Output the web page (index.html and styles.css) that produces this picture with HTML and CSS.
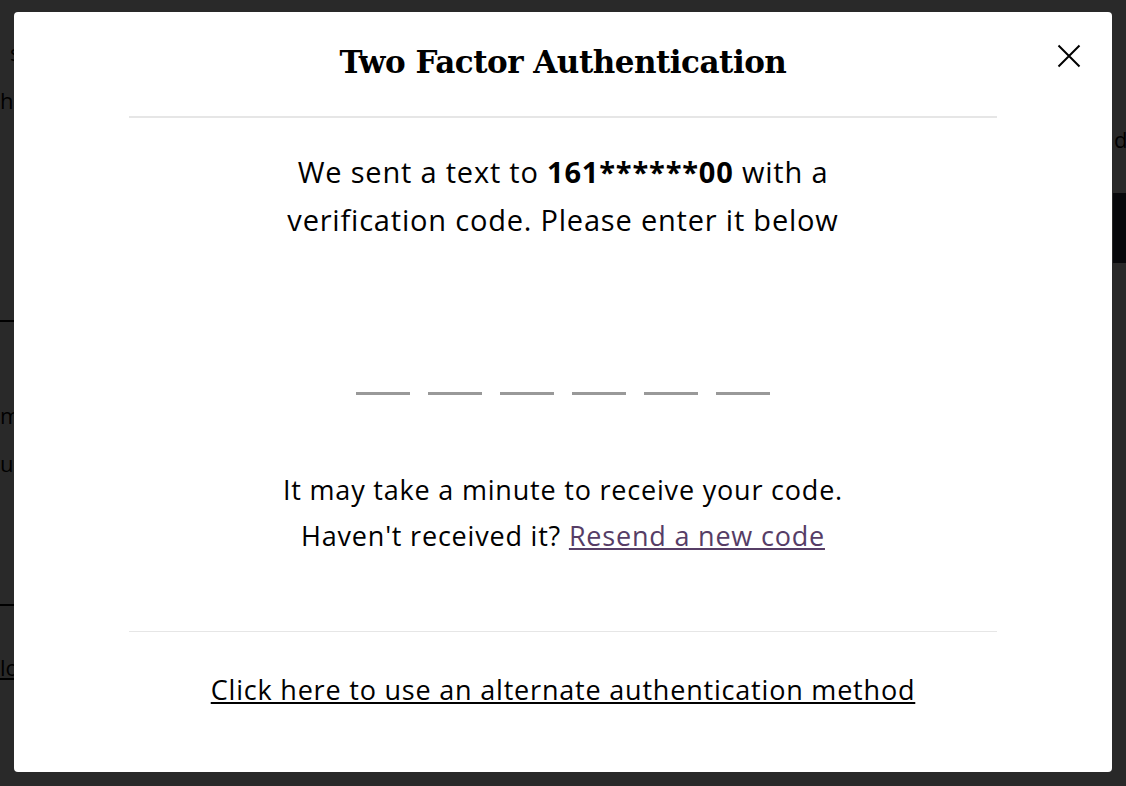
FILE: index.html
```html
<!DOCTYPE html>
<html lang="en">
<head>
    <meta charset="UTF-8">
    <meta name="viewport" content="width=device-width, initial-scale=1.0">
    <title>Two Factor Authentication</title>
    <link rel="stylesheet" href="styles.css">
</head>
<body>
    <!-- Account page sitting behind the dialog -->
    <div class="page">
        <div class="side">
            <p class="side-item side-top">statements</p>
            <p class="side-item">help centre</p>
            <hr class="side-rule">
            <p class="side-item">manage alerts</p>
            <p class="side-item">update details</p>
            <hr class="side-rule side-rule-low">
            <a class="side-link" href="#">log out</a>
        </div>
        <div class="main">
            <p class="main-note">d</p>
            <div class="main-bar"></div>
        </div>
    </div>

    <!-- Two factor dialog -->
    <div class="overlay">
        <div class="modal" role="dialog" aria-labelledby="tfaTitle">
            <button class="close" aria-label="Close">
                <svg width="24" height="24" viewBox="0 0 24 24">
                    <path d="M1.5 1.5 L22.5 22.5 M22.5 1.5 L1.5 22.5" stroke="#000" stroke-width="2" fill="none"/>
                </svg>
            </button>
            <div class="modal-head">
                <h2 id="tfaTitle">Two Factor Authentication</h2>
            </div>
            <div class="modal-body">
                <p class="lead">We sent a text to <strong>161******00</strong> with a<br>verification code. Please enter it below</p>
                <div class="code">
                    <input type="text" maxlength="1" inputmode="numeric">
                    <input type="text" maxlength="1" inputmode="numeric">
                    <input type="text" maxlength="1" inputmode="numeric">
                    <input type="text" maxlength="1" inputmode="numeric">
                    <input type="text" maxlength="1" inputmode="numeric">
                    <input type="text" maxlength="1" inputmode="numeric">
                </div>
                <p class="hint">It may take a minute to receive your code.<br>Haven't received it? <a class="resend" href="#">Resend a new code</a></p>
            </div>
            <div class="modal-foot">
                <a class="alt" href="#">Click here to use an alternate authentication method</a>
            </div>
        </div>
    </div>
</body>
</html>
```

FILE: styles.css
```css
body {
    margin: 0;
    font-family: "Open Sans", "Liberation Sans", sans-serif;
    color: #000;
    background-color: #ffffff;
    overflow: hidden;
}

/* page behind the overlay */
.page {
    display: flex;
    justify-content: space-between;
    height: 786px;
}
.side {
    width: 300px;
    font-size: 22px;
}
.side-item {
    margin: 0;
    line-height: 48px;
    white-space: nowrap;
}
.side-top {
    margin-top: 28px;
    padding-left: 10px;
}
.side-rule {
    border: none;
    border-top: 2px solid #000;
    margin: 196px 0 69px;
}
.side-rule-low {
    margin: 117px 0 37px;
}
.side-link {
    color: #000;
    font-size: 22px;
    line-height: 48px;
}
.main {
    width: 13px;
    font-size: 22px;
}
.main-note {
    margin: 124px 0 39px 1px;
}
.main-bar {
    height: 70px;
    background-color: #2e3347;
}

/* dialog */
.overlay {
    position: fixed;
    inset: 0;
    background-color: rgba(0, 0, 0, 0.84);
    display: flex;
    justify-content: center;
    align-items: flex-start;
}
.modal {
    position: relative;
    width: 1098px;
    height: 760px;
    margin-top: 12px;
    background-color: #ffffff;
    border-radius: 4px;
    display: flex;
    flex-direction: column;
    align-items: center;
}
.close {
    position: absolute;
    top: 32px;
    right: 31px;
    width: 24px;
    height: 24px;
    padding: 0;
    border: none;
    background: none;
    cursor: pointer;
}
.close svg {
    display: block;
}
.modal-head {
    width: 868px;
    height: 106px;
    box-sizing: border-box;
    padding-bottom: 4px;
    border-bottom: 2px solid #e6e6e6;
    display: flex;
    align-items: center;
    justify-content: center;
}
.modal-head h2 {
    margin: 0;
    font-family: "DejaVu Serif", "Liberation Serif", serif;
    font-size: 31px;
    font-weight: bold;
    letter-spacing: -0.5px;
}
.modal-body {
    width: 868px;
    padding-top: 30px;
    text-align: center;
    font-size: 27px;
    letter-spacing: 0.8px;
}
.lead, .hint {
    margin: 0;
    line-height: 48px;
}
.lead {
    font-size: 29px;
}
.hint {
    line-height: 46px;
}
.code {
    display: flex;
    justify-content: center;
    align-items: flex-start;
    gap: 18px;
    height: 223px;
    box-sizing: border-box;
    padding-top: 118px;
}
.code input {
    width: 54px;
    height: 33px;
    box-sizing: border-box;
    padding: 0;
    border: none;
    border-bottom: 3px solid #999999;
    outline: none;
    font-size: 24px;
    text-align: center;
}
.resend {
    color: #563d66;
}
.modal-foot {
    width: 868px;
    margin-top: 72px;
    border-top: 1px solid #e6e6e6;
    padding-top: 35px;
    text-align: center;
    font-size: 27px;
    letter-spacing: 0.8px;
    line-height: 46px;
}
.alt {
    color: #000;
}
```
